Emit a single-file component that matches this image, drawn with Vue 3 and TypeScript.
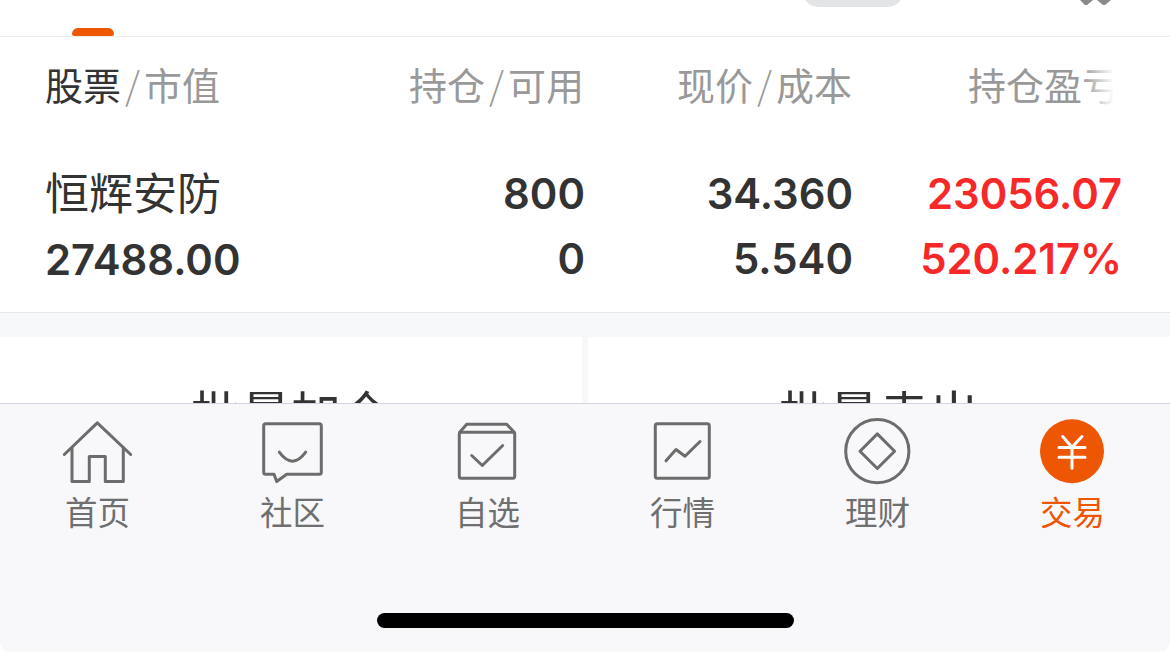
<script setup lang="ts">
interface Column {
  head: string;
  sub: string;
  top: string;
  bottom: string;
}

const columns: Column[] = [
  { head: "持仓", sub: "可用", top: "800", bottom: "0" },
  { head: "现价", sub: "成本", top: "34.360", bottom: "5.540" },
];

const tabs = ["home", "community", "watch", "market", "finance", "trade"];
const labels: Record<string, string> = {
  home: "首页",
  community: "社区",
  watch: "自选",
  market: "行情",
  finance: "理财",
  trade: "交易",
};
</script>

<template>
  <div class="page">
    <main class="content">
      <div class="topbar">
        <div class="tab-mark"></div>
        <div class="toggle"></div>
        <svg class="top-icon" width="36" height="6" viewBox="0 0 36 6">
          <path d="M2 0H15L9 5H7ZM19 0H33L27 5H25Z" fill="#8a8a8a" />
        </svg>
      </div>

      <section class="holdings">
        <div class="cell cell-name">
          <div class="head"><span class="head-main">股票</span><i>/</i>市值</div>
          <div class="name">恒辉安防</div>
          <div class="num">27488.00</div>
        </div>
        <div v-for="col in columns" :key="col.head" class="cell">
          <div class="head">{{ col.head }}<i>/</i>{{ col.sub }}</div>
          <div class="num num-top">{{ col.top }}</div>
          <div class="num">{{ col.bottom }}</div>
        </div>
        <div class="cell cell-profit">
          <div class="head head-fade">持仓盈亏</div>
          <div class="num num-top red">23056.07</div>
          <div class="num red">520.217%</div>
        </div>
      </section>

      <section class="actions">
        <button class="action">批量加仓</button>
        <button class="action">批量卖出</button>
      </section>
    </main>

    <nav class="tabbar">
      <div class="tabs">
        <div v-for="tab in tabs" :key="tab" class="tabitem" :class="{ active: tab === 'trade' }">
          <svg class="icon" width="72" height="72" viewBox="0.5 -0.5 72 72" fill="none" stroke="#6c6c6c" stroke-width="3" stroke-linejoin="round" stroke-linecap="round">
            <template v-if="tab === 'home'">
              <path d="M2.8 39L35.8 7.3L69.2 39" />
              <path d="M10.5 32V66H27.8V41H43.8V66H61.8V32" />
            </template>
            <template v-else-if="tab === 'community'">
              <path d="M9.2 8.3H62.8Q64.8 8.3 64.8 10.3V56.7Q64.8 58.7 62.8 58.7H30.2L20.2 66L17.5 58.7H9.2Q7.2 58.7 7.2 56.7V10.3Q7.2 8.3 9.2 8.3Z" />
              <path d="M22.8 36.7Q36 54.7 49.2 36.7" />
            </template>
            <template v-else-if="tab === 'watch'">
              <path d="M9.8 16.7H61.2Q63.2 16.7 63.2 18.7V60.7Q63.2 62.7 61.2 62.7H9.8Q7.8 62.7 7.8 60.7V18.7Q7.8 16.7 9.8 16.7Z" />
              <path d="M8 17L15.2 8.7H55.2L63 17" />
              <path d="M20.2 40L30.8 50L51.2 30" />
            </template>
            <template v-else-if="tab === 'market'">
              <rect x="8.8" y="8.3" width="54" height="54.4" rx="2" />
              <path d="M19.5 45.3L29.5 34L38.5 40.7L53.5 26" />
            </template>
            <template v-else-if="tab === 'finance'">
              <circle cx="35.8" cy="35.7" r="31.6" />
              <path d="M35.8 18.4L53.1 35.7L35.8 53L18.5 35.7Z" />
            </template>
            <template v-else>
              <circle cx="35.5" cy="35.7" r="32" fill="#ed5603" stroke="none" />
              <path d="M26.2 21L35.5 31.7L45.5 21M22.5 32H48.5M22.5 41.7H48.5M35.5 31.7V52.7" stroke="#ffffff" />
            </template>
          </svg>
          <span class="tablabel">{{ labels[tab] }}</span>
        </div>
      </div>
      <div class="homebar"></div>
    </nav>
  </div>
</template>

<style scoped>
.page {
  width: 1170px;
  height: 652px;
  display: flex;
  flex-direction: column;
  overflow: hidden;
  background: #ffffff;
  font-family: "Noto Sans CJK SC", "Noto Sans", sans-serif;
}

.content {
  height: 403px;
  overflow: hidden;
  flex: none;
  background: #f7f8fa;
}

.topbar {
  height: 36px;
  display: flex;
  align-items: flex-start;
  background: #ffffff;
  border-bottom: 1px solid #ececec;
  overflow: hidden;
}

.tab-mark {
  width: 42px;
  height: 8px;
  margin: 28px 0 0 72px;
  background: #ed5603;
  border-radius: 8px 8px 3px 3px;
}

.toggle {
  width: 100px;
  height: 30px;
  margin: -23px 0 0 689px;
  background: #e3e4e6;
  border-radius: 15px;
}

.top-icon {
  margin-left: 175px;
}

.holdings {
  display: grid;
  grid-template-columns: 240px 298px 268px 268px;
  padding: 0 50px 0 46px;
  height: 275px;
  background: #ffffff;
  border-bottom: 1px solid #e8e8e8;
}

.cell {
  display: flex;
  flex-direction: column;
  align-items: flex-end;
  white-space: nowrap;
}

.cell-name {
  align-items: flex-start;
  margin-left: -1px;
}

.head {
  height: 100px;
  line-height: 94px;
  font-size: 38px;
  color: #999999;
}

.head i {
  font-style: normal;
  padding: 0 4px;
  font-weight: 300;
}

.head-main {
  color: #333333;
}

.head-fade {
  position: relative;
}

.head-fade::after {
  content: "";
  position: absolute;
  top: 0;
  right: 0;
  width: 38px;
  height: 100%;
  background: linear-gradient(to right, rgba(255, 255, 255, 0), #ffffff 85%);
}

.name {
  height: 67px;
  margin-top: 24px;
  line-height: 60px;
  font-size: 44px;
  color: #333333;
}

.num {
  height: 65px;
  line-height: 65px;
  font-family: Inter, "Liberation Sans", sans-serif;
  font-size: 41.8px;
  font-weight: 600;
  color: #333333;
}

.num-top {
  margin-top: 25px;
}

.cell:not(.cell-name) .num {
  transform: translateX(1px);
}

.cell-profit .num.red {
  transform: translateX(2px);
}

.red {
  color: #f62828;
}

.actions {
  display: flex;
  justify-content: space-between;
  margin-top: 24px;
}

.action {
  width: 582px;
  height: 120px;
  padding: 28px 0 0;
  border: none;
  background: #ffffff;
  font-family: inherit;
  font-size: 50px;
  color: #333333;
}

.tabbar {
  flex: 1;
  display: flex;
  flex-direction: column;
  background: #f8f8fb;
  border-top: 1px solid #d5d3dd;
  border-radius: 0 0 10px 10px;
}

.tabs {
  display: grid;
  grid-template-columns: repeat(6, 195px);
  padding-top: 11px;
}

.tabitem {
  display: flex;
  flex-direction: column;
  align-items: center;
  color: #6f6f6f;
}

.tabitem.active {
  color: #ed5603;
}

.tablabel {
  font-size: 32.5px;
  line-height: 48px;
}

.homebar {
  width: 417px;
  height: 15px;
  margin: 78px auto 0;
  background: #000000;
  border-radius: 8px;
}
</style>
